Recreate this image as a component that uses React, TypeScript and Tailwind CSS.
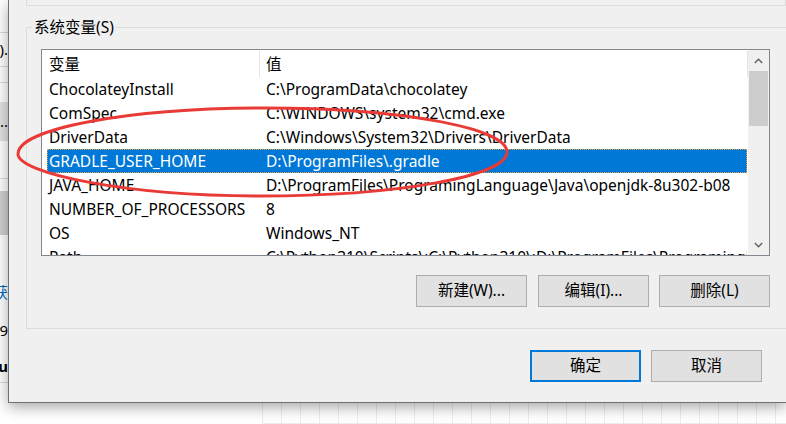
import React from "react";

const rows: [string, string][] = [
  ["ChocolateyInstall", "C:\\ProgramData\\chocolatey"],
  ["ComSpec", "C:\\WINDOWS\\system32\\cmd.exe"],
  ["DriverData", "C:\\Windows\\System32\\Drivers\\DriverData"],
  ["GRADLE_USER_HOME", "D:\\ProgramFiles\\.gradle"],
  ["JAVA_HOME", "D:\\ProgramFiles\\ProgramingLanguage\\Java\\openjdk-8u302-b08"],
  ["NUMBER_OF_PROCESSORS", "8"],
  ["OS", "Windows_NT"],
  ["Path", "C:\\Python310\\Scripts\\;C:\\Python310\\;D:\\ProgramFiles\\ProgramingLanguage"],
];

function Btn({ label, primary }: { label: string; primary?: boolean }) {
  return (
    <div
      className={
        primary
          ? "w-[111px] h-[32px] flex items-center justify-center bg-[#e1e1e1] border-2 border-[#0078d7] text-[15.5px] text-black"
          : "w-[111px] h-[32px] flex items-center justify-center bg-[#e1e1e1] border border-[#adadad] text-[15.5px] text-black"
      }
    >
      {label}
    </div>
  );
}

export default function App() {
  return (
    <div className="relative w-[786px] h-[424px] overflow-hidden bg-white font-['Noto_Sans','Noto_Sans_CJK_SC',sans-serif] text-black">
      <div className="flex h-[403px]">
        {/* window behind, left strip */}
        <div className="w-[8px] shrink-0 flex flex-col bg-white text-[15px] overflow-hidden">
          <div className="h-[33px] border-b border-[#dcdcdc]" />
          <div className="h-[34px] flex items-center justify-end whitespace-nowrap border-b border-[#dcdcdc]">0).</div>
          <div className="h-[16px] border-b border-[#dcdcdc]" />
          <div className="h-[19px]" />
          <div className="h-[39px] bg-[#e3e3e3] flex items-center justify-end whitespace-nowrap">...</div>
          <div className="h-[38px] border-b border-[#dcdcdc]" />
          <div className="h-[12px]" />
          <div className="h-[44px] bg-[#d0d0d0]" />
          <div className="h-[45px]" />
          <div className="h-[24px] flex items-center justify-end whitespace-nowrap text-[#0067c0]">获</div>
          <div className="h-[14px]" />
          <div className="h-[24px] flex items-center justify-end whitespace-nowrap">.9</div>
          <div className="h-[12px]" />
          <div className="h-[24px] flex items-center justify-end whitespace-nowrap font-bold">ru</div>
          <div className="h-[5px] border-b border-[#dcdcdc]" />
        </div>

        {/* dialog */}
        <div className="relative z-10 w-[778px] shrink-0 h-[403px] bg-[#f0f0f0] border-l border-b border-[#707070] shadow-[0_4px_14px_rgba(0,0,0,0.35)] flex flex-col">
          <div className="ml-[17px] h-[6px] border-x border-b border-[#dcdcdc]" />

          <fieldset className="ml-[17px] mt-[11px] border border-[#dcdcdc] px-0 pb-[21px]">
            <legend className="ml-[5px] px-[2px] text-[15.5px] leading-[20px]">系统变量(S)</legend>
            <div className="pl-[14px] pr-[16px] pt-[12px] flex flex-col">
              {/* list view */}
              <div className="w-[729px] h-[207px] border border-[#828790] bg-white flex overflow-hidden">
                <div className="flex-1 flex flex-col overflow-hidden">
                  <div className="h-[27px] shrink-0 flex text-[15.5px]">
                    <div className="w-[217px] pl-[7px] pt-[2px] flex items-center">变量</div>
                    <div className="w-px mt-[1px] bg-[#e5e5e5]" />
                    <div className="flex-1 pl-[6px] pt-[2px] flex items-center">值</div>
                    <div className="w-px mt-[1px] bg-[#e5e5e5]" />
                  </div>
                  {rows.map(([k, v]) => {
                    const sel = k === "GRADLE_USER_HOME";
                    return (
                      <div
                        key={k}
                        className={
                          sel
                            ? "ml-[5px] mr-[1px] h-[24px] shrink-0 flex items-center pt-[1px] text-[15.5px] whitespace-nowrap bg-[#0078d7] text-white outline outline-1 outline-dotted outline-offset-[-1px] outline-[#e0a050]"
                            : "ml-[5px] mr-[1px] h-[24px] shrink-0 flex items-center pt-[1px] text-[15.5px] whitespace-nowrap"
                        }
                      >
                        <div className="w-[219px] shrink-0 pl-[2px]">{k}</div>
                        <div className="flex-1 overflow-hidden">{v}</div>
                      </div>
                    );
                  })}
                </div>
                {/* scrollbar */}
                <div className="w-[21px] shrink-0 bg-[#f0f0f0] flex flex-col">
                  <div className="h-[21px] flex items-center justify-center">
                    <svg width="9" height="6" viewBox="0 0 9 6">
                      <path d="M0.8 5 L4.5 1.3 L8.2 5" stroke="#606060" strokeWidth="1.4" fill="none" />
                    </svg>
                  </div>
                  <div className="mx-[1px] h-[55px] bg-[#cdcdcd]" />
                  <div className="flex-1" />
                  <div className="h-[21px] flex items-center justify-center">
                    <svg width="9" height="6" viewBox="0 0 9 6">
                      <path d="M0.8 1 L4.5 4.7 L8.2 1" stroke="#606060" strokeWidth="1.4" fill="none" />
                    </svg>
                  </div>
                </div>
              </div>

              <div className="mt-[19px] flex justify-end gap-[10px]">
                <div className="mr-[1px]">
                  <Btn label="新建(W)..." />
                </div>
                <Btn label="编辑(I)..." />
                <Btn label="删除(L)" />
              </div>
            </div>
          </fieldset>

          <div className="mt-[21px] flex justify-end gap-[10px] pr-[24px]">
            <Btn label="确定" primary />
            <Btn label="取消" />
          </div>
        </div>
      </div>

      {/* desktop below */}
      <div className="ml-[262px] h-[21px] border-b border-[#ececec] bg-[repeating-linear-gradient(90deg,#ececec_0_1px,transparent_1px_19px)]" />

      {/* red annotation ellipse */}
      <svg className="absolute left-0 top-0 z-20 pointer-events-none" width="786" height="424" viewBox="0 0 786 424">
        <path
          d="M18 154 C18 128.6 128.6 108 265 108 C398.6 108 507 127.7 507 152 C507 176.3 396.3 196 260 196 C125 196 18 173 18 154 Z"
          stroke="#e93a36"
          strokeWidth="3"
          fill="none"
        />
      </svg>
    </div>
  );
}
